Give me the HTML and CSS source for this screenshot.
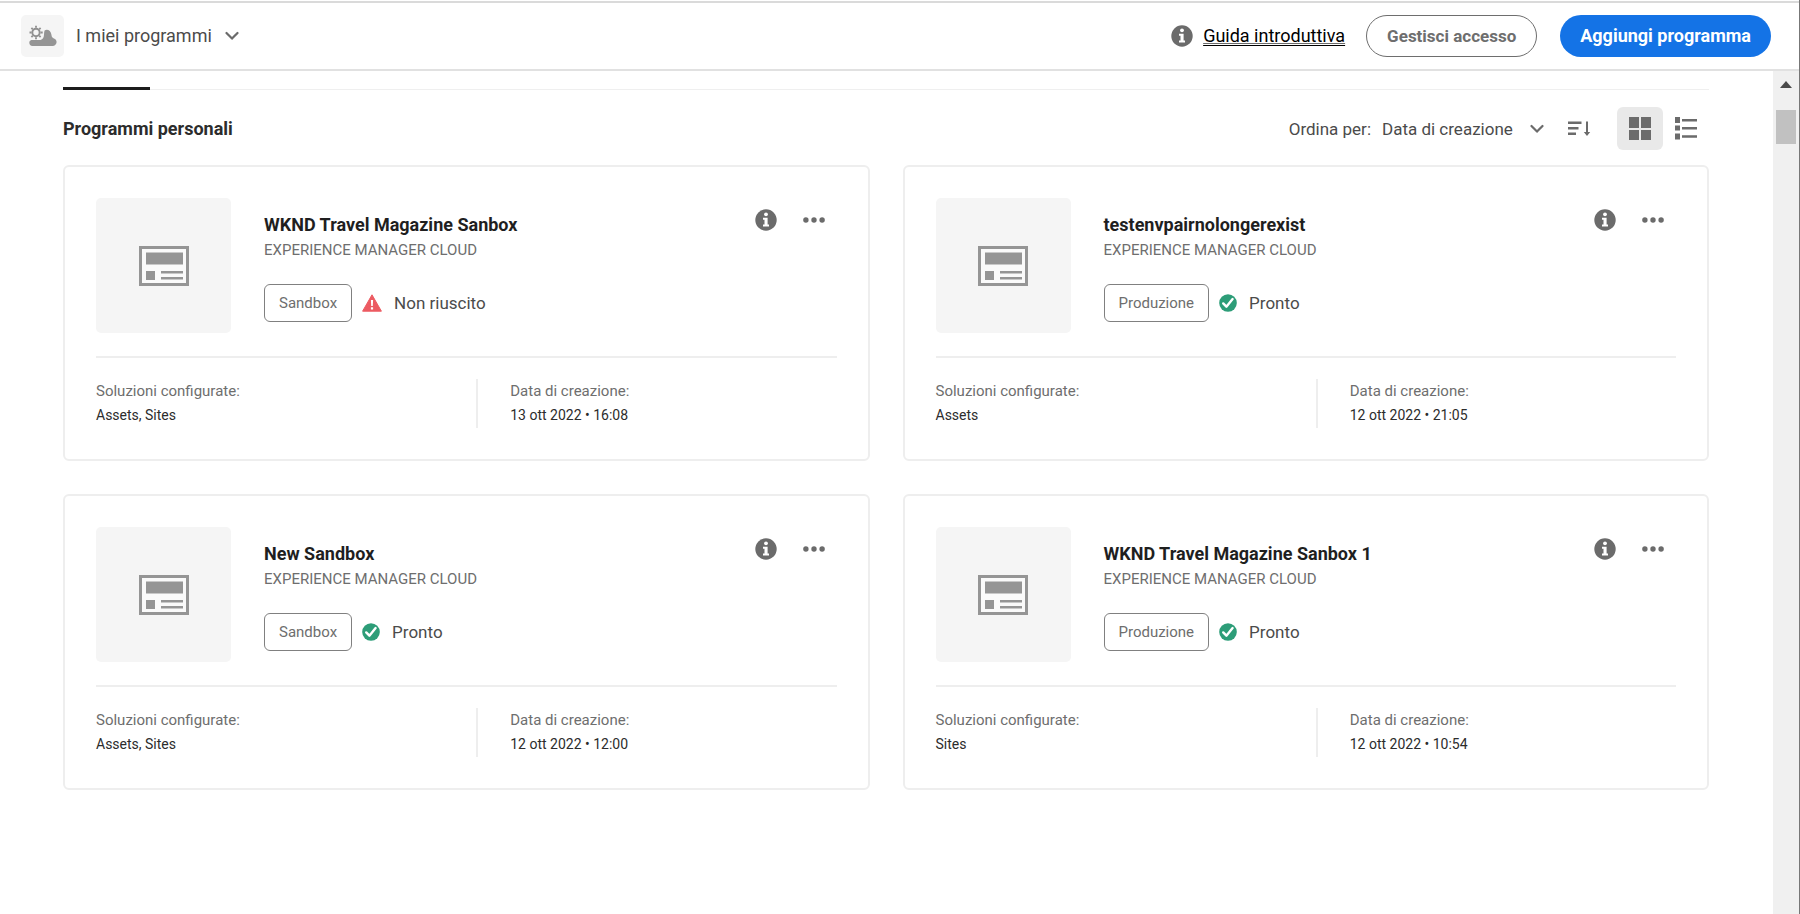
FILE: index.html
```
<!DOCTYPE html>
<html lang="it">
<head>
<meta charset="utf-8">
<meta name="viewport" content="width=device-width, initial-scale=1">
<title>I miei programmi</title>
<link rel="stylesheet" href="styles.css">
</head>
<body>
<svg class="sprite" aria-hidden="true">
  <symbol id="i-info" viewBox="0 0 22 22">
    <circle cx="11" cy="11" r="10.700" fill="currentColor"/>
    <circle cx="11" cy="5.300" r="1.900" fill="#fff"/>
    <path d="M8 8.800h4.600v6.700H14v2H8v-2h1.500v-4.700H8z" fill="#fff"/>
  </symbol>
  <symbol id="i-more" viewBox="0 0 22 6">
    <g fill="currentColor"><circle cx="2.900" cy="3" r="2.700"/><circle cx="11" cy="3" r="2.700"/><circle cx="19.100" cy="3" r="2.700"/></g>
  </symbol>
  <symbol id="i-chevron" viewBox="0 0 14 10">
    <path d="M1.500 2 7 7.600 12.500 2" fill="none" stroke="currentColor" stroke-width="2.200" stroke-linecap="round" stroke-linejoin="round"/>
  </symbol>
  <symbol id="i-page" viewBox="0 0 50 40">
    <path d="M1.500 1.500h47v37h-47z" fill="#fafafa" stroke="currentColor" stroke-width="3"/>
    <path d="M7 6.500h37v12H7zM7 25h9v9H7zM22 25h22v2.500H22zM22 31h22v2.500H22z" fill="currentColor"/>
  </symbol>
  <symbol id="i-ready" viewBox="0 0 18 18">
    <circle cx="9" cy="9" r="8.800" fill="#2d9d78"/>
    <path d="m4.200 9.400 3.200 3.300 6.200-7.600" fill="none" stroke="#fff" stroke-width="2.400" stroke-linecap="round" stroke-linejoin="round"/>
  </symbol>
  <symbol id="i-failed" viewBox="0 0 20 18">
    <path d="M10 .8 19.400 17.200H.6z" fill="#ec5b62" stroke="#ec5b62" stroke-linejoin="round"/>
    <path d="M8.900 6h2.200l-.3 6H9.200zM8.900 13.200h2.200v2.200H8.900z" fill="#fff"/>
  </symbol>
</svg>

<header class="topbar">
  <button class="switcher" type="button">
    <span class="switcher-logo">
      <svg width="28" height="22" viewBox="0 0 28 22" aria-hidden="true">
        <g fill="none" stroke="#909090">
          <circle cx="7" cy="7.500" r="3.700" stroke-width="2"/>
          <path stroke-width="1.800" d="M7 .8v2M7 12.200v2M.5 7.500h2M11.700 7.500h2M2.400 2.900l1.400 1.400M10.200 10.700l1.400 1.400M2.400 12.100l1.400-1.400M10.200 4.300l1.400-1.400"/>
        </g>
        <path fill="#959595" d="M3.500 21a3.300 3.300 0 0 1-3.200-3.200c0-1.300.8-2.300 2-2.700H9c3 .2 5-.8 5.700-3.400.5-2 .2-4.500.9-6.200C17.800 3.800 22 5 22.500 10c.2 1.300.4 2.300 1.500 2.900 2.200.6 3.600 2.200 3.600 4.100 0 2.300-1.800 4-4 4z"/>
      </svg>
    </span>
    <span>I miei programmi</span>
    <svg class="chevron" width="14" height="10"><use href="#i-chevron"/></svg>
  </button>
  <nav class="top-actions">
    <a class="guide" href="#"><svg width="22" height="22"><use href="#i-info"/></svg><span class="guide-text">Guida introduttiva</span></a>
    <button class="btn btn-outline" type="button">Gestisci accesso</button>
    <button class="btn btn-primary" type="button">Aggiungi programma</button>
  </nav>
</header>

<div class="viewport">
  <main class="content">
    <div class="tabs"><span class="tab-active"></span></div>
    <div class="toolbar">
      <h1 class="heading">Programmi personali</h1>
      <label class="sort-label" for="sort">Ordina per:</label>
      <span class="sort">
        <select id="sort" class="sort-select"><option>Data di creazione</option></select>
        <svg class="chevron" width="14" height="10"><use href="#i-chevron"/></svg>
      </span>
      <button class="icon-btn order" type="button" aria-label="Ordine decrescente">
        <svg width="24" height="18" viewBox="0 0 24 18"><path d="M1 1.500h13.500V4H1zM1 7h10.500v2.500H1zM1 12.500h8V15H1zM19 1.500h2V12h-2zM16.800 12h6.400L20 16z" fill="currentColor"/></svg>
      </button>
      <button class="icon-btn view is-on" type="button" aria-label="Griglia">
        <svg width="22" height="24" viewBox="0 0 22 24"><path d="M0 0h10v11H0zM12 0h10v11H12zM0 13h10v10H0zM12 13h10v10H12z" fill="currentColor"/></svg>
      </button>
      <button class="icon-btn view" type="button" aria-label="Elenco">
        <svg width="22" height="24" viewBox="0 0 22 24"><path d="M0 0h5v6H0zM7 2h15v2.500H7zM0 8.500h5v5H0zM7 10h15v2.500H7zM0 16.500h5v6H0zM7 18.200h15v2.500H7z" fill="currentColor"/></svg>
      </button>
    </div>

    <section class="cards">
      <article class="card">
        <div class="card-top">
          <div class="thumb"><svg width="50" height="40"><use href="#i-page"/></svg></div>
          <div class="info">
            <h2 class="title">WKND Travel Magazine Sanbox</h2>
            <p class="product">EXPERIENCE MANAGER CLOUD</p>
            <div class="state"><span class="badge">Sandbox</span><svg class="state-icon" width="20" height="18"><use href="#i-failed"/></svg><span>Non riuscito</span></div>
          </div>
          <div class="card-actions">
            <button class="icon-btn" type="button" aria-label="Informazioni"><svg width="22" height="22"><use href="#i-info"/></svg></button>
            <button class="icon-btn" type="button" aria-label="Altro"><svg width="22" height="6"><use href="#i-more"/></svg></button>
          </div>
        </div>
        <dl class="details">
          <div class="detail"><dt>Soluzioni configurate:</dt><dd>Assets, Sites</dd></div>
          <div class="detail"><dt>Data di creazione:</dt><dd>13 ott 2022 • 16:08</dd></div>
        </dl>
      </article>

      <article class="card">
        <div class="card-top">
          <div class="thumb"><svg width="50" height="40"><use href="#i-page"/></svg></div>
          <div class="info">
            <h2 class="title">testenvpairnolongerexist</h2>
            <p class="product">EXPERIENCE MANAGER CLOUD</p>
            <div class="state"><span class="badge">Produzione</span><svg class="state-icon" width="18" height="18"><use href="#i-ready"/></svg><span>Pronto</span></div>
          </div>
          <div class="card-actions">
            <button class="icon-btn" type="button" aria-label="Informazioni"><svg width="22" height="22"><use href="#i-info"/></svg></button>
            <button class="icon-btn" type="button" aria-label="Altro"><svg width="22" height="6"><use href="#i-more"/></svg></button>
          </div>
        </div>
        <dl class="details">
          <div class="detail"><dt>Soluzioni configurate:</dt><dd>Assets</dd></div>
          <div class="detail"><dt>Data di creazione:</dt><dd>12 ott 2022 • 21:05</dd></div>
        </dl>
      </article>

      <article class="card">
        <div class="card-top">
          <div class="thumb"><svg width="50" height="40"><use href="#i-page"/></svg></div>
          <div class="info">
            <h2 class="title">New Sandbox</h2>
            <p class="product">EXPERIENCE MANAGER CLOUD</p>
            <div class="state"><span class="badge">Sandbox</span><svg class="state-icon" width="18" height="18"><use href="#i-ready"/></svg><span>Pronto</span></div>
          </div>
          <div class="card-actions">
            <button class="icon-btn" type="button" aria-label="Informazioni"><svg width="22" height="22"><use href="#i-info"/></svg></button>
            <button class="icon-btn" type="button" aria-label="Altro"><svg width="22" height="6"><use href="#i-more"/></svg></button>
          </div>
        </div>
        <dl class="details">
          <div class="detail"><dt>Soluzioni configurate:</dt><dd>Assets, Sites</dd></div>
          <div class="detail"><dt>Data di creazione:</dt><dd>12 ott 2022 • 12:00</dd></div>
        </dl>
      </article>

      <article class="card">
        <div class="card-top">
          <div class="thumb"><svg width="50" height="40"><use href="#i-page"/></svg></div>
          <div class="info">
            <h2 class="title">WKND Travel Magazine Sanbox 1</h2>
            <p class="product">EXPERIENCE MANAGER CLOUD</p>
            <div class="state"><span class="badge">Produzione</span><svg class="state-icon" width="18" height="18"><use href="#i-ready"/></svg><span>Pronto</span></div>
          </div>
          <div class="card-actions">
            <button class="icon-btn" type="button" aria-label="Informazioni"><svg width="22" height="22"><use href="#i-info"/></svg></button>
            <button class="icon-btn" type="button" aria-label="Altro"><svg width="22" height="6"><use href="#i-more"/></svg></button>
          </div>
        </div>
        <dl class="details">
          <div class="detail"><dt>Soluzioni configurate:</dt><dd>Sites</dd></div>
          <div class="detail"><dt>Data di creazione:</dt><dd>12 ott 2022 • 10:54</dd></div>
        </dl>
      </article>
    </section>
  </main>
  <div class="scrollbar" aria-hidden="true">
    <svg class="scroll-arrow" width="12" height="7" viewBox="0 0 12 7"><path d="M6 0 12 7H0z" fill="#4a4a4a"/></svg>
    <span class="scroll-thumb"></span>
  </div>
</div>
</body>
</html>
```
FILE: styles.css
```
* {
  box-sizing: border-box;
}

body {
  display: flex;
  flex-direction: column;
  min-height: 100vh;
  margin: 0;
  border-right: 1px solid #777;
  background: #fff;
  color: #4b4b4b;
  font-family: Roboto, "Liberation Sans", sans-serif;
  font-size: 17px;
  line-height: 24px;
}

button,
select {
  margin: 0;
  padding: 0;
  border: 0;
  background: none;
  color: inherit;
  font: inherit;
}

h1,
h2,
p,
dl,
dd {
  margin: 0;
}

svg {
  display: block;
  flex: none;
}

.sprite {
  position: absolute;
  width: 0;
  height: 0;
}

.chevron {
  color: #6b6b6b;
}

/* Top bar */

.topbar {
  display: flex;
  align-items: center;
  justify-content: space-between;
  margin-top: 1px;
  padding: 12px 28px 12px 21px;
  border-top: 2px solid #dadada;
  border-bottom: 2px solid #e1e1e1;
}

.switcher {
  display: flex;
  align-items: center;
  font-size: 18px;
}

.switcher-logo {
  display: grid;
  place-items: center;
  width: 43px;
  height: 42px;
  margin-right: 12px;
  border-radius: 5px;
  background: #f5f5f5;
}

.switcher .chevron {
  margin-left: 13px;
}

.top-actions {
  display: flex;
  align-items: center;
}

.guide {
  display: flex;
  align-items: center;
  gap: 10px;
  margin-right: 21px;
  color: #6b6b6b;
}

.guide-text {
  color: #000;
  font-size: 18px;
  text-decoration: underline;
  text-underline-offset: 3px;
}

.btn {
  height: 42px;
  padding: 0 20px;
  border-radius: 21px;
  font-weight: 700;
}

.btn-outline {
  border: 1px solid #6e6e6e;
  color: #6e6e6e;
}

.btn-primary {
  margin-left: 23px;
  background: #1473e6;
  color: #fff;
  font-size: 18px;
}

/* Scrolling area */

.viewport {
  display: flex;
  flex: 1;
}

.content {
  flex: 1;
  padding: 0 64px 64px 63px;
}

.scrollbar {
  display: flex;
  flex-direction: column;
  align-items: center;
  width: 26px;
  padding-top: 10px;
  background: #f0f0f0;
}

.scroll-thumb {
  width: 20px;
  height: 34px;
  margin-top: 22px;
  background: #c1c1c1;
}

.tabs {
  display: flex;
  align-items: flex-end;
  height: 19px;
  border-bottom: 1px solid #efefef;
}

.tab-active {
  width: 87px;
  height: 3px;
  margin-bottom: -1px;
  background: #1c1c1c;
}

.toolbar {
  display: flex;
  align-items: center;
  padding: 17px 0 15px;
}

.heading {
  flex: 1;
  color: #2c2c2c;
  font-size: 18px;
  font-weight: 700;
}

.sort-label {
  margin-right: 11px;
}

.sort {
  display: grid;
  align-items: center;
}

.sort > * {
  grid-area: 1 / 1;
}

.sort-select {
  padding-right: 31px;
  appearance: none;
}

.sort .chevron {
  justify-self: end;
  pointer-events: none;
}

.icon-btn {
  display: grid;
  place-items: center;
  color: #6b6b6b;
}

.order {
  margin: 0 26px 0 23px;
}

.view {
  width: 46px;
  height: 43px;
  border-radius: 6px;
}

.is-on {
  background: #e9e9e9;
}

/* Program cards */

.cards {
  display: grid;
  grid-template-columns: 1fr 1fr;
  gap: 33px;
}

.card {
  padding: 31px 31px;
  border: 2px solid #eee;
  border-radius: 6px;
}

.card-top {
  display: flex;
  padding-bottom: 23px;
  border-bottom: 2px solid #eee;
}

.thumb {
  display: grid;
  place-items: center;
  width: 135px;
  height: 135px;
  margin-right: 33px;
  border-radius: 5px;
  background: #f5f5f5;
  color: #959595;
}

.info {
  flex: 1;
  padding-top: 15px;
}

.title {
  color: #1f1f1f;
  font-size: 18px;
  font-weight: 700;
}

.product {
  padding-top: 1px;
  color: #6e6e6e;
  font-size: 15px;
}

.state {
  display: flex;
  align-items: center;
  margin-top: 22px;
}

.badge {
  padding: 6px 14px;
  border: 1px solid #808080;
  border-radius: 6px;
  color: #6e6e6e;
  font-size: 15px;
}

.state-icon {
  margin: 0 12px 0 10px;
}

.card-actions {
  display: flex;
  align-items: center;
  gap: 26px;
  height: 22px;
  margin: 11px 12px 0 0;
}

.details {
  display: grid;
  grid-template-columns: 1fr 1fr;
  padding-top: 21px;
}

.detail {
  padding-bottom: 1px;
  font-size: 15px;
}

.detail + .detail {
  margin-left: 10px;
  padding-left: 32px;
  border-left: 2px solid #eee;
}

.detail dt {
  color: #6e6e6e;
}

.detail dd {
  color: #2c2c2c;
  font-size: 14px;
}
```
